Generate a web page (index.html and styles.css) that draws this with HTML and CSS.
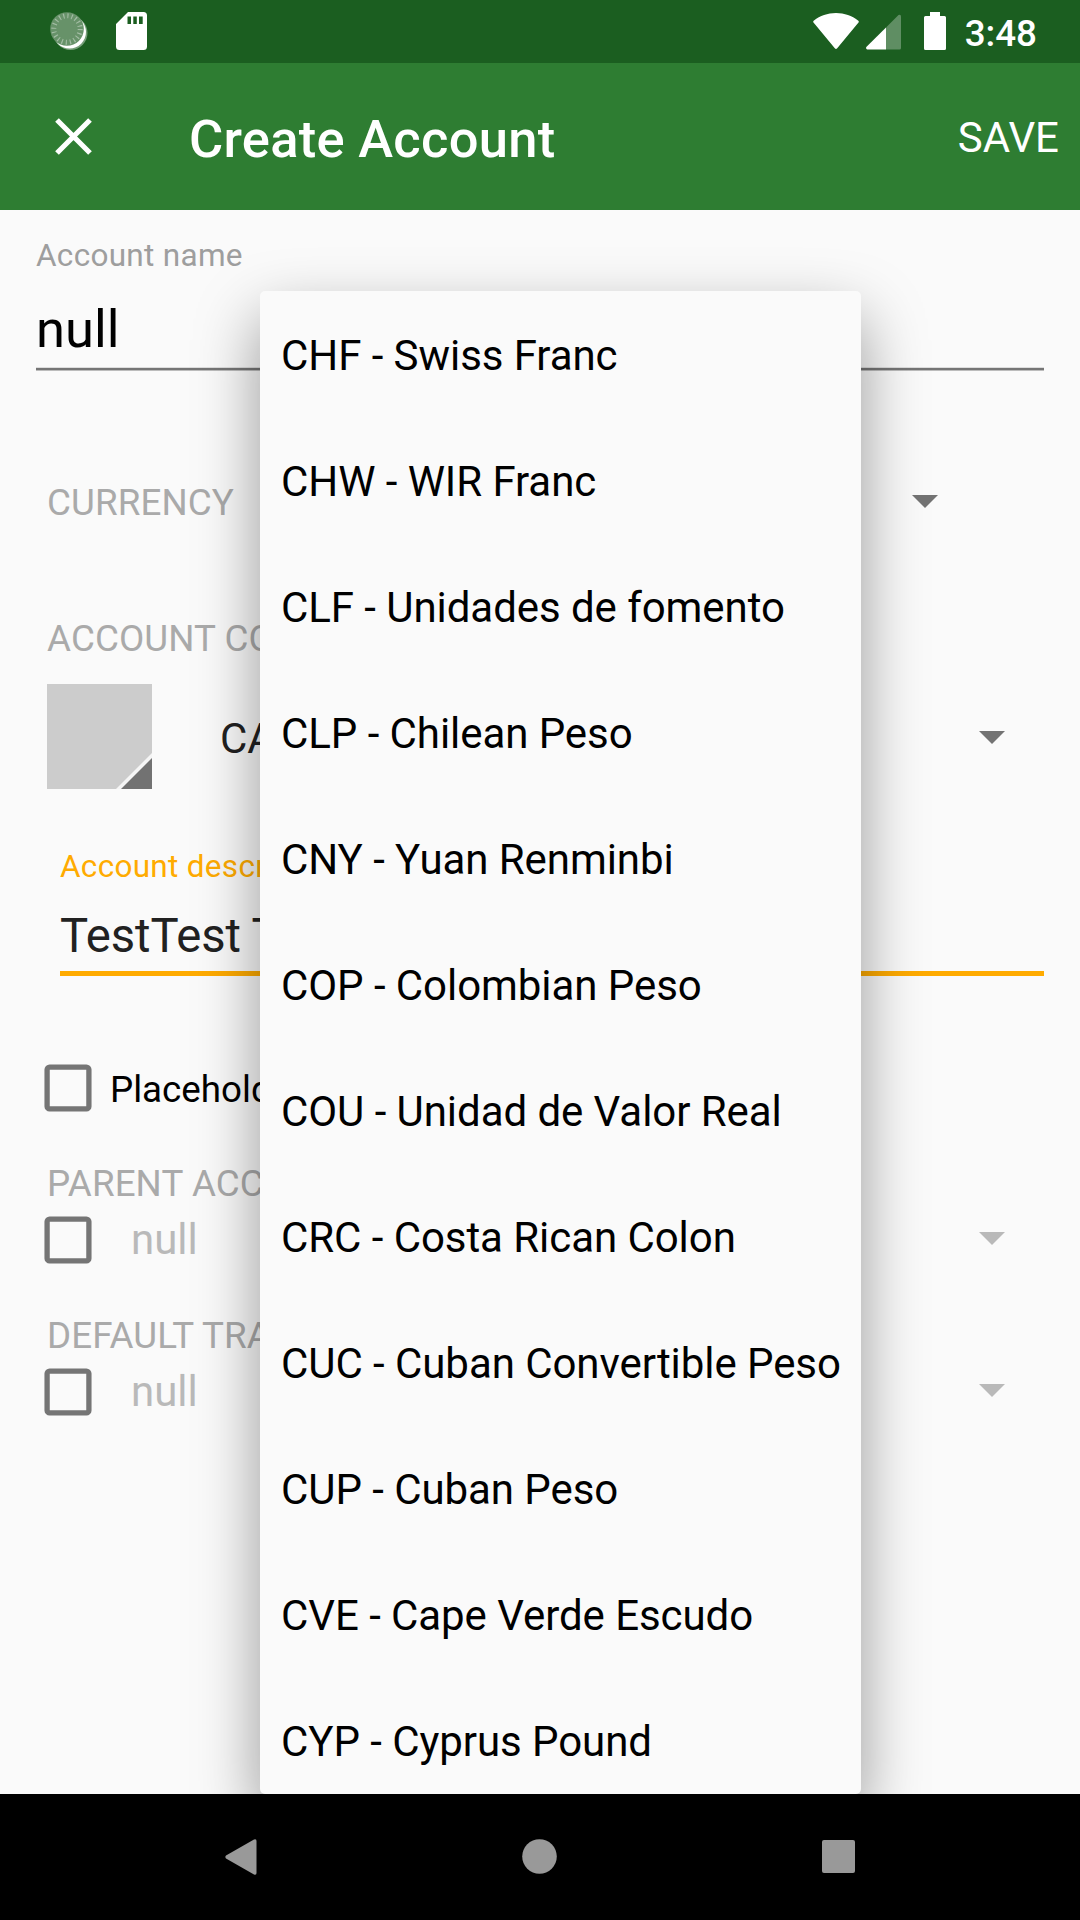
FILE: index.html
```html
<!DOCTYPE html>
<html lang="en">
<head>
<meta charset="utf-8">
<title>Create Account</title>
<link rel="stylesheet" href="styles.css">
</head>
<body>
<div class="screen">
  <header class="status">
    <svg class="icon-sync" viewBox="0 0 38 39">
      <circle cx="20.5" cy="21" r="17" fill="#fff" opacity=".4"/>
      <circle cx="19.5" cy="20" r="16.5" fill="#fff"/>
      <circle cx="17" cy="17" r="16.8" fill="#679269"/>
      <circle cx="17" cy="17" r="13.2" fill="none" stroke="#a3bda4" stroke-width="5" stroke-dasharray="1.15 2.997"/>
    </svg>
    <svg class="icon-sd" viewBox="0 0 31 38">
      <path fill="#fff" fill-rule="evenodd" d="M12 0H27.500Q31 0 31 3.500V34.500Q31 38 27.500 38H3.500Q0 38 0 34.500V12ZM11.500 4.500V12H15V4.500ZM17.300 4.500V12H20.800V4.500ZM23 4.500V12H26.700V4.500Z"/>
    </svg>
    <div class="status-right">
      <svg class="icon-wifi" viewBox="0 0 46 36"><path fill="#fff" d="M.5 9.500Q-.3 8.300 1 7.500C7 2.800 14.500 0 23 0S39 2.800 45 7.500Q46.300 8.300 45.500 9.500L24.200 35.300Q23 36.500 21.800 35.300Z"/></svg>
      <svg class="icon-cell" viewBox="0 0 35 36"><path fill="#fff" opacity=".3" d="M20 13.500 32.500 1Q35 0 35 2.500V34Q35 35.500 33.500 35.500H20Z"/><path fill="#fff" d="M20 13.500V35.500H1.300Q-.5 35 .3 33Z"/></svg>
      <svg class="icon-battery" viewBox="0 0 22 38"><path fill="#fff" d="M6 0H16V4H20.500Q22 4 22 5.500V36.500Q22 38 20.500 38H1.500Q0 38 0 36.500V5.500Q0 4 1.500 4H6Z"/></svg>
      <span class="clock">3:48</span>
    </div>
  </header>
  <div class="toolbar">
    <svg class="icon-close" viewBox="0 0 37 37"><path d="M2 2 35 35M35 2 2 35" stroke="#fff" stroke-width="5.200" fill="none"/></svg>
    <h1 class="title">Create Account</h1>
    <span class="save">SAVE</span>
  </div>
  <main class="form">
    <div class="field name-field">
      <label class="caption">Account name</label>
      <div class="name-value">null</div>
      <div class="rule"></div>
    </div>
    <div class="currency-row"><span class="heading">CURRENCY</span><svg class="arrow" viewBox="0 0 26 13"><path d="M0 0H26L13 13Z"/></svg></div>
    <div class="heading color-heading">ACCOUNT COLOR &amp; TYPE</div>
    <div class="color-row">
      <svg class="swatch" viewBox="0 0 105 105"><path fill="#ccc" d="M0 0H105V105H0Z"/><path fill="#f5f5f5" d="M105 69V105H69Z"/><path fill="#727272" d="M105 74V105H74Z"/></svg>
      <span class="type-value">CASH</span>
      <svg class="arrow" viewBox="0 0 26 13"><path d="M0 0H26L13 13Z"/></svg>
    </div>
    <div class="field desc-field">
      <label class="caption accent">Account description</label>
      <div class="desc-value">TestTest Test</div>
      <div class="rule-accent"></div>
    </div>
    <div class="check-row placeholder-row"><svg class="box" viewBox="0 0 48 48"><rect x="3.100" y="3.100" width="41.800" height="41.800" rx="2.500"/></svg><span class="check-label">Placeholder account</span></div>
    <div class="heading group-heading">PARENT ACCOUNT</div>
    <div class="check-row group-row"><svg class="box" viewBox="0 0 48 48"><rect x="3.100" y="3.100" width="41.800" height="41.800" rx="2.500"/></svg><span class="null-value">null</span><svg class="arrow faint" viewBox="0 0 26 13"><path d="M0 0H26L13 13Z"/></svg></div>
    <div class="heading group-heading">DEFAULT TRANSFER ACCOUNT</div>
    <div class="check-row group-row"><svg class="box" viewBox="0 0 48 48"><rect x="3.100" y="3.100" width="41.800" height="41.800" rx="2.500"/></svg><span class="null-value">null</span><svg class="arrow faint" viewBox="0 0 26 13"><path d="M0 0H26L13 13Z"/></svg></div>
    <ul class="popup">
      <li>CHF - Swiss Franc</li>
      <li>CHW - WIR Franc</li>
      <li>CLF - Unidades de fomento</li>
      <li>CLP - Chilean Peso</li>
      <li>CNY - Yuan Renminbi</li>
      <li>COP - Colombian Peso</li>
      <li>COU - Unidad de Valor Real</li>
      <li>CRC - Costa Rican Colon</li>
      <li>CUC - Cuban Convertible Peso</li>
      <li>CUP - Cuban Peso</li>
      <li>CVE - Cape Verde Escudo</li>
      <li>CYP - Cyprus Pound</li>
    </ul>
  </main>
  <nav class="navbar">
    <svg class="nav-back" viewBox="0 0 32 36"><path fill="#999" d="M29 .5Q31.500 -.5 31.500 2V34Q31.500 36.500 29 35.500L1 19.500Q-.3 18 1 16.500Z"/></svg>
    <svg class="nav-home" viewBox="0 0 35 35"><circle cx="17.500" cy="17.500" r="17.300" fill="#999"/></svg>
    <span class="nav-recent"></span>
  </nav>
</div>
</body>
</html>
```
FILE: styles.css
```css
* { box-sizing: border-box; }
body { margin: 0; font-family: Roboto, sans-serif; background: #fafafa; }
svg { display: block; flex: none; }
.screen { width: 1080px; height: 1920px; display: flex; flex-direction: column; overflow: hidden; }

.status { height: 63px; background: #1b5e20; display: flex; align-items: flex-start; padding: 12px 43px 0 50px; }
.icon-sync { width: 38px; height: 39px; }
.icon-sd { width: 31px; height: 38px; margin-left: 28px; }
.status-right { margin-left: auto; display: flex; align-items: flex-start; }
.icon-wifi { width: 46px; height: 36px; margin-top: 1px; }
.icon-cell { width: 35px; height: 36px; margin: 2px 0 0 7px; }
.icon-battery { width: 22px; height: 38px; margin-left: 23px; }
.clock { font-size: 36.75px; font-weight: 500; line-height: 44px; color: #fff; margin: 0 0 0 19px; }

.toolbar { height: 147px; background: #2e7d32; display: flex; align-items: center; padding: 0 21px 0 55px; color: #fff; }
.icon-close { width: 37px; height: 37px; }
.title { margin: 5px 0 0 97px; font-size: 52.5px; font-weight: 500; line-height: 62px; letter-spacing: .26px; }
.save { margin: 2px 0 0 auto; font-size: 42px; line-height: 50px; }

.form { position: relative; height: 1584px; flex: none; overflow: hidden; background: #fafafa; padding-top: 26px; }
.field { display: flex; flex-direction: column; margin-right: 36px; white-space: nowrap; }
.name-field { margin-left: 36px; }
.caption { font-size: 31.5px; line-height: 40px; color: #9e9e9e; letter-spacing: .3px; }
.name-value { margin-top: 22px; font-size: 52.5px; line-height: 62px; color: #000; }
.rule { height: 4px; margin-top: 7px; background: #757575; border-top: 1px solid #ddd; border-bottom: 1px solid #bcbcbc; }
.heading { font-size: 36.75px; line-height: 40px; color: #aaa; white-space: nowrap; letter-spacing: .1px; }
.currency-row { height: 60px; margin: 102px 142.5px 0 47px; display: flex; align-items: center; justify-content: space-between; }
.arrow { width: 26px; height: 13px; fill: #737373; margin-left: auto; }
.currency-row .arrow { margin-bottom: 3px; }
.color-row .arrow { margin-top: 2px; }
.faint { fill: #b9b9b9; margin-bottom: 4px; }
.color-heading { margin: 86px 0 0 47px; }
.color-row { height: 105px; margin: 25px 75.5px 0 47px; display: flex; align-items: center; }
.swatch { width: 105px; height: 105px; }
.type-value { margin: 4px 0 0 68px; font-size: 42px; line-height: 50px; color: #212121; }
.desc-field { margin-top: 58px; margin-left: 60px; }
.accent { color: #ffab00; }
.desc-value { margin-top: 19px; font-size: 47.25px; line-height: 60px; color: #212121; letter-spacing: -.1px; }
.rule-accent { height: 5px; margin-top: 5px; background: #ffab00; }
.check-row { height: 48px; margin-right: 75.5px; margin-left: 44px; display: flex; align-items: center; }
.placeholder-row { margin-top: 88px; }
.box { width: 48px; height: 48px; fill: none; stroke: #757575; stroke-width: 5.3px; }
.check-label { margin: 3px 0 0 18px; font-size: 36.75px; line-height: 44px; color: #000; white-space: nowrap; }
.group-heading { margin: 52px 0 0 47px; }
.group-row { margin-top: 12px; }
.null-value { font-size: 42px; line-height: 48px; color: #b9b9b9; margin-left: 39px; }

/* Currency menu floats above the form */
.popup { position: absolute; left: 260px; top: 81px; width: 601px; height: 1503px; margin: 0; padding: 2px 0 0; list-style: none; overflow: hidden; background: #fafafa; border-radius: 5px; box-shadow: 0 27px 64px rgba(0,0,0,.4); }
.popup li { height: 126px; padding-left: 21px; font-size: 42px; line-height: 126px; color: #000; white-space: nowrap; letter-spacing: -.06px; }

.navbar { flex: 1; background: #000; display: flex; align-items: center; justify-content: space-between; padding: 0 225.5px 1px 225px; }
.nav-back { width: 32px; height: 36px; }
.nav-home { width: 35px; height: 35px; }
.nav-recent { width: 33px; height: 33px; background: #999; border-radius: 2px; }
```
